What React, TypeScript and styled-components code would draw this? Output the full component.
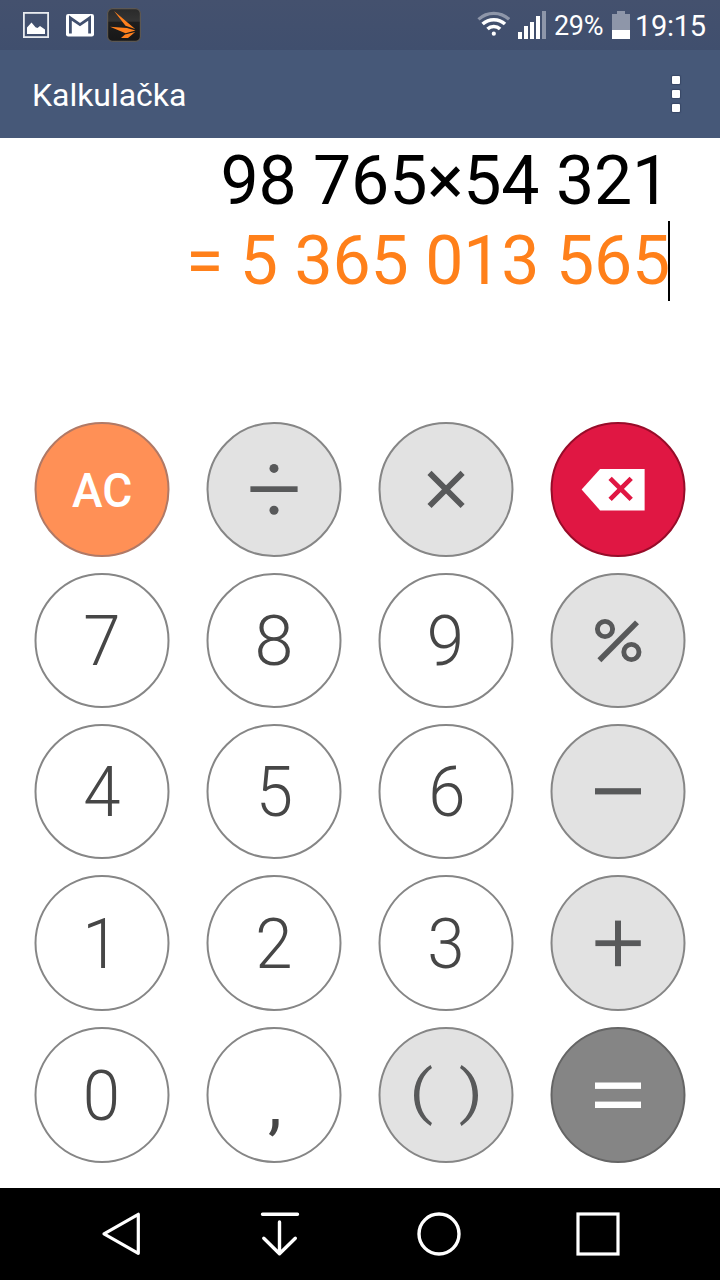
import React from "react";
import styled, { createGlobalStyle, css } from "styled-components";

const GlobalStyle = createGlobalStyle`
  * { box-sizing: border-box; }
  html, body { margin: 0; padding: 0; background: #fff; }
  body { font-family: Roboto, "Liberation Sans", sans-serif; }
`;

const Screen = styled.main`
  display: flex;
  flex-direction: column;
  width: 720px;
  height: 1280px;
  overflow: hidden;
  background: #fff;
`;

const StatusBar = styled.div`
  display: flex;
  justify-content: space-between;
  flex: none;
  height: 50px;
  padding: 0 14px 0 23px;
  background: linear-gradient(#44516e, #404f6e);
  color: #fff;
`;

const StatusGroup = styled.div`
  display: flex;
  align-items: flex-start;
`;

const StatusIcon = styled.svg<{ $top: number; $gap?: number }>`
  display: block;
  flex: none;
  margin-top: ${(p) => p.$top}px;
  margin-right: ${(p) => p.$gap ?? 0}px;
`;

const StatusText = styled.span<{ $size: number; $width: number }>`
  width: ${(p) => p.$width}px;
  font-size: ${(p) => p.$size}px;
  line-height: 52px;
  letter-spacing: -0.3px;
  white-space: nowrap;
`;

const AppBar = styled.header`
  display: flex;
  align-items: center;
  justify-content: space-between;
  flex: none;
  height: 88px;
  padding: 0 40px 0 32px;
  background: #465878;
  color: #fff;
`;

const Title = styled.h1`
  margin: 1px 0 0;
  font-size: 32px;
  font-weight: 400;
  line-height: 40px;
  letter-spacing: -0.04px;
`;

const MenuButton = styled.button`
  display: flex;
  flex-direction: column;
  gap: 6px;
  padding: 0;
  border: 0;
  background: none;
`;

const MenuDot = styled.span`
  width: 8px;
  height: 8px;
  border-radius: 1px;
  background: #fff;
  box-shadow: 0 0 1px 1px rgba(40, 50, 80, 0.45);
`;

const Display = styled.section`
  display: flex;
  flex-direction: column;
  align-items: flex-end;
  flex: none;
  height: 284px;
  padding: 3px 50px 0 0;
  font-size: 68px;
  line-height: 80px;
  letter-spacing: -0.2px;
  white-space: pre;
`;

const Expression = styled.div`
  height: 80px;
  color: #000;
`;

const Result = styled.div`
  display: flex;
  height: 80px;
  color: #ff801a;
`;

const Caret = styled.span`
  width: 2px;
  height: 80px;
  margin-left: -2px;
  background: #000;
`;

const Keypad = styled.section`
  display: grid;
  flex: none;
  grid-template-columns: repeat(4, 135px);
  grid-template-rows: 135px 135px 135px 136px 136px;
  gap: 16px 37px;
  height: 766px;
  padding-left: 34px;
  transform: translateX(0.5px);
`;

type Tone = "digit" | "operator" | "clear" | "erase" | "equals";

const tones = {
  digit: css`
    background: #fff;
    border-color: #868686;
    color: #464646;
  `,
  operator: css`
    background: #e2e2e2;
    border-color: #868686;
    color: #58595a;
  `,
  clear: css`
    background: #ff9056;
    border-color: #b07966;
    color: #fff;
  `,
  erase: css`
    background: #e01743;
    border-color: #970c29;
    color: #fff;
  `,
  equals: css`
    background: #858585;
    border-color: #656565;
    color: #fff;
  `,
};

const Key = styled.button<{ $tone: Tone }>`
  display: flex;
  align-items: center;
  justify-content: center;
  padding: 0;
  border: 2px solid;
  border-radius: 50%;
  ${(p) => tones[p.$tone]}
`;

const Digit = styled.span<{ $narrow?: boolean; $x?: number; $y?: number }>`
  font: 300 70px/80px Roboto, "Liberation Sans", sans-serif;
  transform: translate(${(p) => p.$x ?? 0}px, ${(p) => p.$y ?? 0}px) scaleX(${(p) => (p.$narrow ? 0.96 : 1)});
`;

const Comma = styled.span`
  padding: 15px 0 0 2px;
  font: 400 70px/80px Roboto, "Liberation Sans", sans-serif;
`;

const ClearLabel = styled.span`
  padding-top: 3px;
  font: 500 49px/60px Roboto, "Liberation Sans", sans-serif;
  transform: translateX(0.6px) scaleX(0.94);
`;

const KeyIcon = styled.svg`
  display: block;
  flex: none;
`;

const NavBar = styled.nav`
  display: flex;
  flex: none;
  height: 92px;
  padding: 22px 80px 0 80px;
  background: #000;
`;

const NavButton = styled.button<{ $width: number }>`
  display: flex;
  width: ${(p) => p.$width}px;
  height: 48px;
  padding: 0;
  border: 0;
  background: none;
`;

/* Operator glyphs share a 131px square centred on (0, 0). */
const Glyph = ({ children }: { children: React.ReactNode }) => (
  <KeyIcon width="131" height="131" viewBox="-65.5 -65.5 131 131" fill="currentColor">
    {children}
  </KeyIcon>
);

const Divide = () => (
  <Glyph>
    <circle cx="0" cy="-21.1" r="4.5" />
    <rect x="-23.6" y="-3.2" width="47.2" height="5.7" />
    <circle cx="0" cy="20.7" r="4.5" />
  </Glyph>
);

const Multiply = () => (
  <Glyph>
    <path d="M-16.5-16.6 16.6 16.5M16.6-16.6-16.5 16.5" stroke="currentColor" strokeWidth="5.8" />
  </Glyph>
);

const Erase = () => (
  <Glyph>
    <path d="M-36.4 0-17.9-20.6H26.6V20.9H-17.9Z" />
    <path d="M-7.9-11.2 13.2 9.9M13.2-11.2-7.9 9.9" stroke="#e01743" strokeWidth="4.7" />
  </Glyph>
);

const Percent = () => (
  <Glyph>
    <g fill="none" stroke="currentColor">
      <path d="M-18.6 19.7 19-18.1" strokeWidth="5.6" />
      <circle cx="-13" cy="-11.5" r="7.6" strokeWidth="4.9" />
      <circle cx="13.4" cy="11.5" r="7.6" strokeWidth="4.9" />
    </g>
  </Glyph>
);

const Minus = () => (
  <Glyph>
    <rect x="-23" y="-3.3" width="46" height="6.2" />
  </Glyph>
);

const Plus = () => (
  <Glyph>
    <rect x="-22.6" y="-3.2" width="45.4" height="5.8" />
    <rect x="-3" y="-22.9" width="6" height="45.6" />
  </Glyph>
);

const Brackets = () => (
  <Glyph>
    <path d="M-15.5-30.4C-26.3-23.5-32-12.5-32 0S-26.3 23.5-15.5 30.4L-14 27.4C-22.7 21-26.6 11-26.6 0S-22.7-21-14-27.4Z" />
    <path d="M15.5-30.4C26.3-23.5 32-12.5 32 0S26.3 23.5 15.5 30.4L14 27.4C22.7 21 26.6 11 26.6 0S22.7-21 14-27.4Z" />
  </Glyph>
);

const Equals = () => (
  <Glyph>
    <rect x="-23" y="-13" width="46" height="6.4" />
    <rect x="-23" y="6.1" width="46" height="6.4" />
  </Glyph>
);

const keys: { name: string; tone: Tone; face: React.ReactNode }[] = [
  { name: "AC", tone: "clear", face: <ClearLabel>AC</ClearLabel> },
  { name: "÷", tone: "operator", face: <Divide /> },
  { name: "×", tone: "operator", face: <Multiply /> },
  { name: "⌫", tone: "erase", face: <Erase /> },
  { name: "7", tone: "digit", face: <Digit $narrow>7</Digit> },
  { name: "8", tone: "digit", face: <Digit>8</Digit> },
  { name: "9", tone: "digit", face: <Digit $narrow $x={-0.5}>9</Digit> },
  { name: "%", tone: "operator", face: <Percent /> },
  { name: "4", tone: "digit", face: <Digit $narrow>4</Digit> },
  { name: "5", tone: "digit", face: <Digit $narrow $x={0.5}>5</Digit> },
  { name: "6", tone: "digit", face: <Digit $narrow $x={1}>6</Digit> },
  { name: "−", tone: "operator", face: <Minus /> },
  { name: "1", tone: "digit", face: <Digit $narrow $x={-1} $y={1}>1</Digit> },
  { name: "2", tone: "digit", face: <Digit $narrow $y={1}>2</Digit> },
  { name: "3", tone: "digit", face: <Digit $narrow $y={1}>3</Digit> },
  { name: "+", tone: "operator", face: <Plus /> },
  { name: "0", tone: "digit", face: <Digit $narrow $x={-0.5} $y={0.5}>0</Digit> },
  { name: ",", tone: "digit", face: <Comma>,</Comma> },
  { name: "( )", tone: "operator", face: <Brackets /> },
  { name: "=", tone: "equals", face: <Equals /> },
];

export default function App() {
  return (
    <>
      <GlobalStyle />
      <Screen>
        <StatusBar>
          <StatusGroup>
            <StatusIcon $top={12} $gap={17} width="26" height="26" viewBox="0 0 26 26">
              <rect x="0.9" y="0.9" width="24.2" height="24.2" fill="none" stroke="#e9ebef" strokeWidth="1.8" />
              <path d="M4 22V15.5L8.5 10.5 12.5 15.2 14.5 16 17 14 22 17.5V22Z" fill="#fff" />
            </StatusIcon>
            <StatusIcon $top={13} $gap={13} width="28" height="24" viewBox="0 0 28 24">
              <rect x="0" y="1" width="28" height="22.4" rx="2.2" fill="#fff" />
              <path d="M4.4 20.4V5L14 11.6 23.6 5V20.4" fill="none" stroke="#42506e" strokeWidth="2.8" />
            </StatusIcon>
            <StatusIcon $top={8} width="34" height="34" viewBox="0 0 34 34">
              <defs>
                <linearGradient id="tile" x1="0" y1="0" x2="0" y2="1">
                  <stop offset="0" stopColor="#2a2a2a" />
                  <stop offset="0.38" stopColor="#343434" />
                  <stop offset="0.42" stopColor="#1e1e1e" />
                  <stop offset="1" stopColor="#171717" />
                </linearGradient>
              </defs>
              <rect x="0.6" y="0.6" width="32.8" height="32.8" rx="5" fill="url(#tile)" stroke="#5c5752" strokeWidth="1.2" />
              <g fill="#ff801e">
                <path d="M7 3 20.5 14.5 28.2 21 18.5 17.8Z" />
                <path d="M3 18.7 20 20 28.5 22.4 18.5 25.2Z" />
                <path d="M28.2 24 21 30H14L18 26.6Z" />
              </g>
            </StatusIcon>
          </StatusGroup>
          <StatusGroup>
            <StatusIcon $top={11} $gap={7} width="34" height="26" viewBox="0 0 34 26" fill="none" strokeWidth="3.2">
              <path d="M1.5 8.3A22.5 22.5 0 0 1 32.1 8.3" stroke="#8e96a9" />
              <path d="M5.6 13.1A16.3 16.3 0 0 1 28 13.1" stroke="#fff" strokeWidth="3.5" />
              <path d="M10.5 18A9 9 0 0 1 23.1 18" stroke="#fff" strokeWidth="3.5" />
              <circle cx="16.8" cy="22.7" r="2.1" fill="#fff" />
            </StatusIcon>
            <StatusIcon $top={11} $gap={8} width="28" height="28" viewBox="0 0 28 28" fill="#fff">
              <rect x="0" y="21" width="4" height="7" />
              <rect x="6" y="15" width="4" height="13" />
              <rect x="12" y="11" width="4" height="17" />
              <rect x="18" y="5" width="4" height="23" />
              <rect x="24" y="0" width="4" height="28" fill="#8e96a9" />
            </StatusIcon>
            <StatusText $size={27} $width={58}>29%</StatusText>
            <StatusIcon $top={11} $gap={5} width="18" height="28" viewBox="0 0 18 28">
              <path d="M5 0H13V3H18V19H0V3H5Z" fill="#8e96a9" />
              <rect x="0" y="19" width="18" height="9" fill="#fff" />
            </StatusIcon>
            <StatusText $size={29} $width={71}>19:15</StatusText>
          </StatusGroup>
        </StatusBar>
        <AppBar>
          <Title>Kalkulačka</Title>
          <MenuButton aria-label="Menu">
            <MenuDot />
            <MenuDot />
            <MenuDot />
          </MenuButton>
        </AppBar>
        <Display>
          <Expression>98 765×54 321</Expression>
          <Result>
            = 5 365 013 565
            <Caret />
          </Result>
        </Display>
        <Keypad>
          {keys.map((key) => (
            <Key key={key.name} $tone={key.tone} aria-label={key.name}>
              {key.face}
            </Key>
          ))}
        </Keypad>
        <NavBar>
          <NavButton $width={159} aria-label="Back">
            <KeyIcon width="80" height="48" viewBox="80 0 80 48" fill="none" stroke="#fff" strokeWidth="3.2" strokeLinejoin="round">
              <path d="M104 23.8 138.3 4.3V43.3Z" />
            </KeyIcon>
          </NavButton>
          <NavButton $width={159} aria-label="Pull down">
            <KeyIcon width="80" height="48" viewBox="239 0 80 48" fill="none" stroke="#fff" strokeWidth="3.4" strokeLinecap="round" strokeLinejoin="round">
              <path d="M262.5 4.2H297.5M279.5 12V43.5M263.8 28.3 279.5 43.8 295.3 28.3" />
            </KeyIcon>
          </NavButton>
          <NavButton $width={159} aria-label="Home">
            <KeyIcon width="80" height="48" viewBox="398 0 80 48" fill="none" stroke="#fff" strokeWidth="3.4">
              <circle cx="439" cy="24" r="20" />
            </KeyIcon>
          </NavButton>
          <NavButton $width={80} aria-label="Recents">
            <KeyIcon width="80" height="48" viewBox="557 0 80 48" fill="none" stroke="#fff" strokeWidth="3.2">
              <rect x="578" y="4" width="40" height="40" />
            </KeyIcon>
          </NavButton>
        </NavBar>
      </Screen>
    </>
  );
}
